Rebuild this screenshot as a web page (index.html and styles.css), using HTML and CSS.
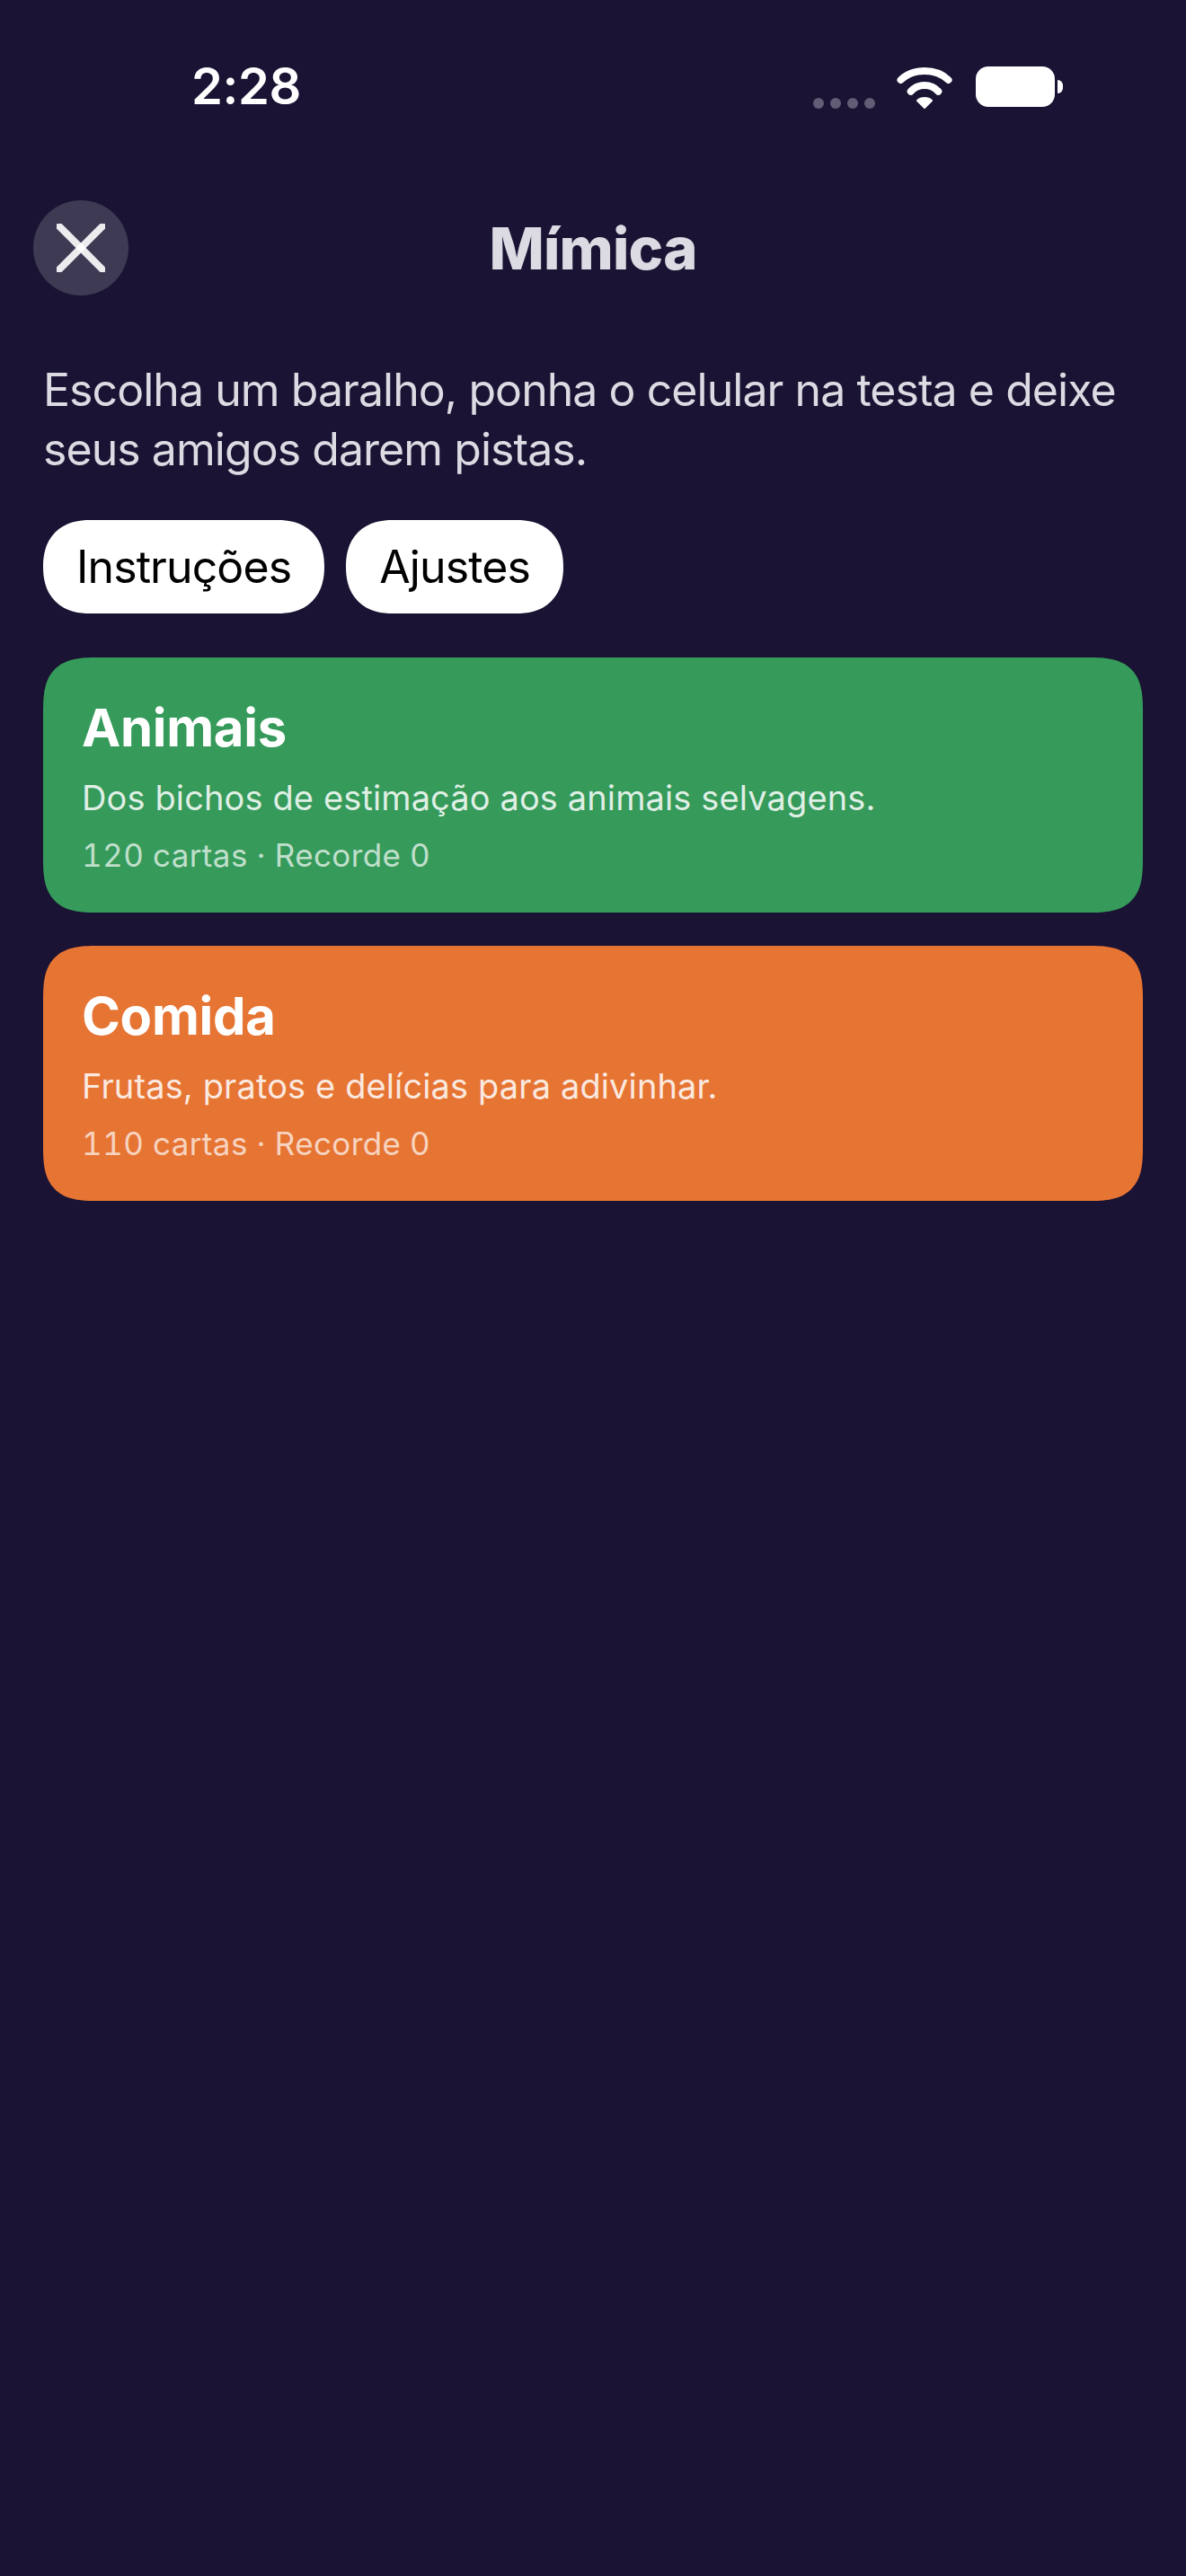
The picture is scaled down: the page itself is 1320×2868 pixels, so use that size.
FILE: index.html
```html
<!DOCTYPE html>
<html lang="pt-BR">
<head>
    <meta charset="UTF-8">
    <meta name="viewport" content="width=device-width, initial-scale=1.0">
    <title>Mímica</title>
    <link rel="stylesheet" href="styles.css">
</head>
<body>
    <div class="status-bar">
        <span class="time">2:28</span>
        <div class="status-icons">
            <div class="signal">
                <span class="dot"></span>
                <span class="dot"></span>
                <span class="dot"></span>
                <span class="dot"></span>
            </div>
            <svg class="wifi" width="62" height="46" viewBox="0 0 62 46">
                <path d="M4.5 14 C 18 0.7, 44 0.7, 57.5 14" fill="none" stroke="#fff" stroke-width="8" stroke-linecap="round"/>
                <path d="M15.7 26.7 C 24 17.8, 38 17.8, 46.3 26.7" fill="none" stroke="#fff" stroke-width="8" stroke-linecap="round"/>
                <path d="M31 45 L 23 37 C 27 33, 35 33, 39 37 Z" fill="#fff" stroke="#fff" stroke-width="2" stroke-linejoin="round"/>
            </svg>
            <div class="battery">
                <div class="battery-body"></div>
                <div class="battery-cap"></div>
            </div>
        </div>
    </div>

    <header class="nav">
        <button class="close-btn">
            <svg width="54" height="54" viewBox="0 0 54 54">
                <path d="M3 3 L51 51" fill="none" stroke="#fff" stroke-opacity="0.9" stroke-width="8" stroke-linecap="round"/>
                <path d="M51 3 L3 51" fill="none" stroke="#fff" stroke-opacity="0.9" stroke-width="8" stroke-linecap="round"/>
            </svg>
        </button>
        <h1 class="nav-title">Mímica</h1>
    </header>

    <main class="content">
        <p class="intro">Escolha um baralho, ponha o celular na testa e deixe seus amigos darem pistas.</p>

        <div class="pill-row">
            <button class="pill">Instruções</button>
            <button class="pill">Ajustes</button>
        </div>

        <div class="deck-list">
            <div class="deck green">
                <h2 class="deck-name">Animais</h2>
                <p class="deck-desc">Dos bichos de estimação aos animais selvagens.</p>
                <p class="deck-meta">120 cartas · Recorde 0</p>
            </div>
            <div class="deck orange">
                <h2 class="deck-name">Comida</h2>
                <p class="deck-desc">Frutas, pratos e delícias para adivinhar.</p>
                <p class="deck-meta">110 cartas · Recorde 0</p>
            </div>
        </div>
    </main>
</body>
</html>
```

FILE: styles.css
```css
* {
    box-sizing: border-box;
}

body {
    margin: 0;
    width: 1320px;
    height: 2868px;
    overflow: hidden;
    background: #1a1333;
    font-family: Inter, "Liberation Sans", sans-serif;
    color: #fff;
}

.status-bar {
    height: 223px;
    padding: 68px 137px 0 213px;
    display: flex;
    justify-content: space-between;
    align-items: flex-start;
}

.time {
    font-size: 56px;
    line-height: 56px;
    font-weight: 600;
    letter-spacing: -0.4px;
}

.status-icons {
    display: flex;
    align-items: flex-start;
}

.signal {
    display: flex;
    gap: 7px;
    margin-top: 41px;
    margin-right: 24px;
}

.dot {
    width: 12px;
    height: 12px;
    border-radius: 50%;
    background: #625c74;
}

.wifi {
    margin-top: 7px;
    margin-right: 26px;
}

.battery {
    display: flex;
    align-items: center;
    gap: 3px;
    margin-top: 6px;
}

.battery-body {
    width: 88px;
    height: 45px;
    border-radius: 14px;
    background: #fff;
}

.battery-cap {
    width: 6px;
    height: 15px;
    border-radius: 0 8px 8px 0;
    background: #fff;
}

.nav {
    position: relative;
    height: 106px;
    display: flex;
    align-items: center;
    justify-content: center;
}

.close-btn {
    position: absolute;
    left: 37px;
    top: 0;
    width: 106px;
    height: 106px;
    padding: 0;
    border: 0;
    border-radius: 50%;
    background: #3f3a54;
    display: flex;
    align-items: center;
    justify-content: center;
}

.nav-title {
    margin: 0;
    font-size: 65px;
    font-weight: 800;
    letter-spacing: -0.8px;
    color: #dcdae2;
}

.content {
    padding: 72px 48px 0;
}

.intro {
    margin: 0;
    font-size: 50px;
    line-height: 66px;
    letter-spacing: -0.95px;
    color: #dcdae2;
}

.pill-row {
    display: flex;
    gap: 24px;
    margin-top: 46px;
}

.pill {
    height: 104px;
    padding: 0 37px;
    border: 0;
    border-radius: 52px;
    corner-shape: superellipse(1.2);
    background: #fff;
    color: #000;
    font-family: inherit;
    font-size: 50px;
    letter-spacing: -0.9px;
}

.deck-list {
    display: flex;
    flex-direction: column;
    gap: 37px;
    margin-top: 49px;
}

.deck {
    height: 284px;
    padding: 44px 43px 0;
    border-radius: 60px;
    corner-shape: superellipse(1.5);
}

.green {
    background: #359a5a;
}

.orange {
    background: #e67433;
}

.deck-name {
    margin: 0;
    font-size: 58px;
    line-height: 68px;
    font-weight: 700;
    letter-spacing: -0.3px;
}

.deck-desc {
    margin: 21px 0 0;
    font-size: 38px;
    line-height: 46px;
    letter-spacing: 0.12px;
    color: rgba(255, 255, 255, 0.85);
}

.deck-meta {
    margin: 20px 0 0;
    font-size: 35px;
    line-height: 42px;
    letter-spacing: 0.38px;
    font-variant-numeric: tabular-nums;
    color: rgba(255, 255, 255, 0.7);
}
```
